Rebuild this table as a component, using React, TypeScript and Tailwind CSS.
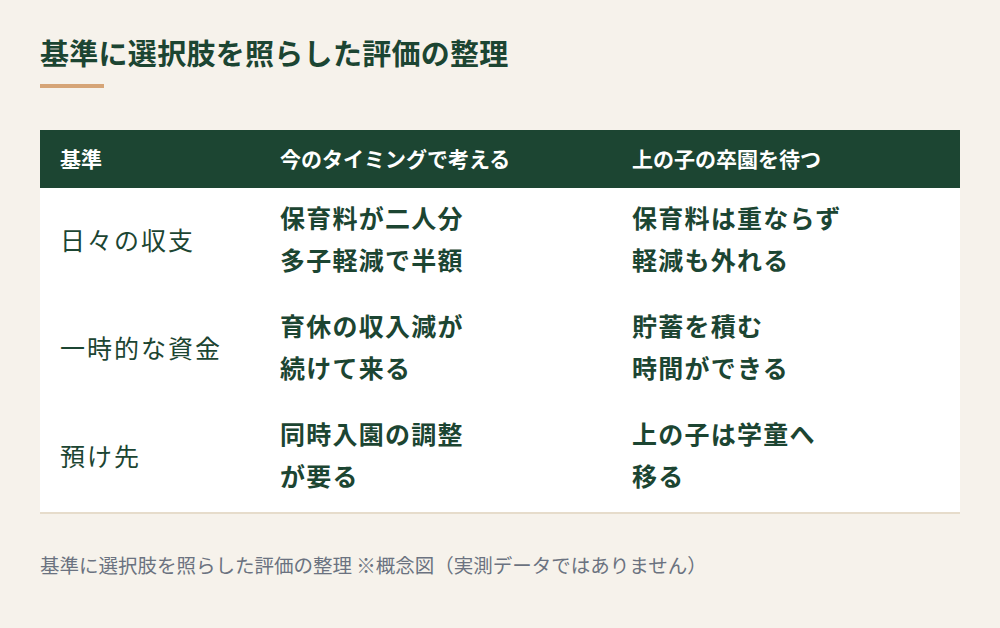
import React from "react";

const rows = [
  { label: "日々の収支", now: ["保育料が二人分", "多子軽減で半額"], wait: ["保育料は重ならず", "軽減も外れる"] },
  { label: "一時的な資金", now: ["育休の収入減が", "続けて来る"], wait: ["貯蓄を積む", "時間ができる"] },
  { label: "預け先", now: ["同時入園の調整", "が要る"], wait: ["上の子は学童へ", "移る"] },
];

export default function App() {
  return (
    <div
      className="min-h-screen w-full bg-[#f6f2eb] px-10 pt-[32px] text-[#1c4532]"
      style={{ fontFamily: '"Noto Sans CJK JP", "Noto Sans", sans-serif' }}
    >
      <h1 className="text-[29px] font-bold leading-[40px] tracking-[0.01em] text-[#1c4532]">
        基準に選択肢を照らした評価の整理
      </h1>
      <div className="mt-[12px] h-1 w-16 bg-[#d6a577]" />

      <div className="mt-[42px] w-[920px] border-b-2 border-[#e6dccb] bg-white">
        <div className="flex h-[58px] items-center bg-[#1c4532] text-[21px] font-bold text-white">
          <div className="w-[220px] px-5">基準</div>
          <div className="w-[352px] px-5">今のタイミングで考える</div>
          <div className="w-[348px] px-5">上の子の卒園を待つ</div>
        </div>
        {rows.map((r) => (
          <div key={r.label} className="flex h-[108px] items-center">
            <div className="w-[220px] px-5 pb-1 text-[25px] tracking-[0.08em]">{r.label}</div>
            <div className="w-[352px] px-5 pb-2 text-[25px] font-bold leading-[42px] tracking-[0.05em]">
              {r.now.map((l) => (
                <div key={l}>{l}</div>
              ))}
            </div>
            <div className="w-[348px] px-5 pb-2 text-[25px] font-bold leading-[42px] tracking-[0.05em]">
              {r.wait.map((l) => (
                <div key={l}>{l}</div>
              ))}
            </div>
          </div>
        ))}
      </div>

      <p className="mt-[36px] text-[19.5px] text-[#6b7280]">
        基準に選択肢を照らした評価の整理 ※概念図（実測データではありません）
      </p>
    </div>
  );
}
